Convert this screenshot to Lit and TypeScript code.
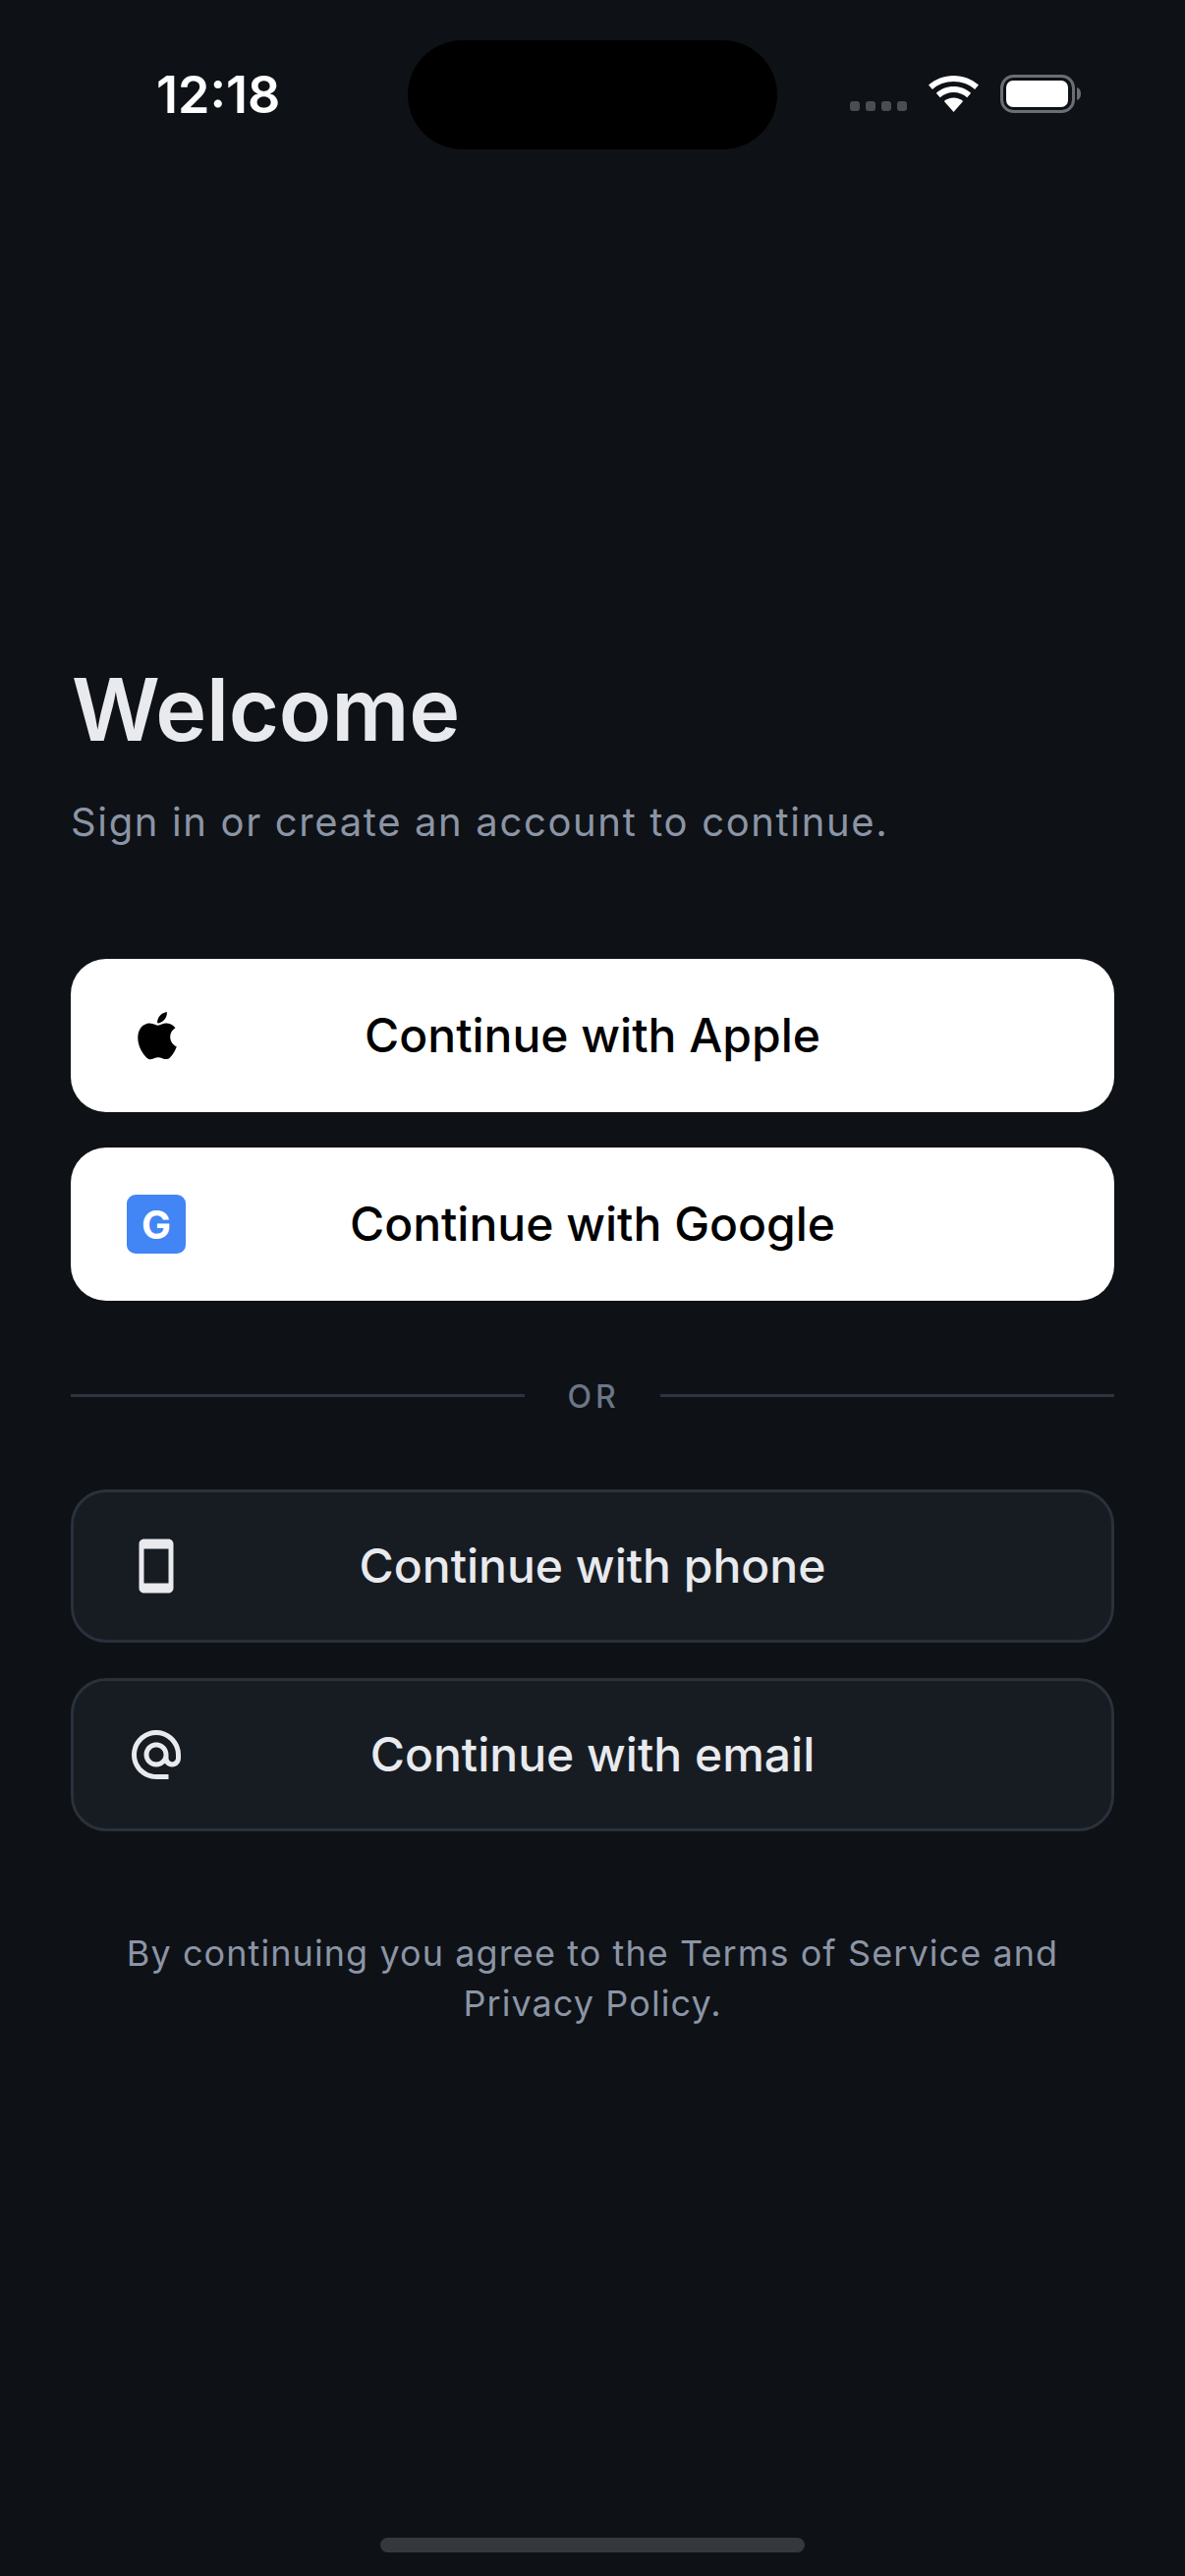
import { LitElement, html, css, svg } from "lit";
import { customElement } from "lit/decorators.js";

const apple = svg`<path transform="translate(-.05 -.81) scale(1.04 1.07)" d="M17.05 20.28c-.98.95-2.05.8-3.08.38-1.09-.43-2.09-.45-3.24 0-1.44.62-2.2.44-3.06-.38C2.79 15.25 3.51 7.59 9.05 7.31c1.35.07 2.29.74 3.08.8 1.18-.24 2.31-.93 3.57-.84 1.51.12 2.65.72 3.4 1.8-3.12 1.87-2.38 5.98.48 7.13-.57 1.5-1.31 2.99-2.54 4.09zM12.03 7.25c-.15-2.23 1.66-4.07 3.74-4.25.29 2.58-2.34 4.5-3.74 4.25z"/>`;
const phone = svg`<path d="M17 1.01L7 1c-1.1 0-2 .9-2 2v18c0 1.1.9 2 2 2h10c1.1 0 2-.9 2-2V3c0-1.1-.9-1.99-2-1.99zM17 19H7V5h10v14z"/>`;
const at = svg`<path d="M12 2C6.48 2 2 6.48 2 12s4.48 10 10 10h5v-2h-5c-4.34 0-8-3.66-8-8s3.66-8 8-8 8 3.66 8 8v1.43c0 .79-.71 1.57-1.5 1.57s-1.5-.78-1.5-1.57V12c0-2.76-2.24-5-5-5s-5 2.24-5 5 2.24 5 5 5c1.38 0 2.64-.56 3.54-1.47.65.89 1.77 1.47 2.96 1.47 1.97 0 3.5-1.6 3.5-3.57V12c0-5.52-4.48-10-10-10zm0 13c-1.66 0-3-1.34-3-3s1.34-3 3-3 3 1.34 3 3-1.34 3-3 3z"/>`;

@customElement("app-root")
export class AppRoot extends LitElement {
  static styles = css`
    :host {
      display: block;
      font-family: Inter, "Liberation Sans", sans-serif;
    }
    .screen {
      position: relative;
      width: 1206px;
      height: 2622px;
      background: #0e1116;
      overflow: hidden;
      display: flex;
      flex-direction: column;
    }
    .status {
      height: 111px;
      margin-top: 41px;
      display: grid;
      grid-template-columns: 415px 376px 1fr;
      align-items: start;
    }
    .time {
      color: #fff;
      font-size: 52px;
      font-weight: 600;
      line-height: 60px;
      padding: 26px 0 0 159px;
    }
    .island {
      height: 111px;
      background: #000;
      border-radius: 56px;
    }
    .sys {
      padding: 35px 0 0 74px;
    }
    .sys svg { display: block; }
    .main {
      padding: 520px 72px 0;
      display: flex;
      flex-direction: column;
    }
    h1 {
      margin: 0;
      padding-left: 1px;
      font-size: 88px;
      line-height: 100px;
      font-weight: 600;
      letter-spacing: -0.2px;
      color: #e8eaee;
    }
    .sub {
      margin: 37px 0 0;
      font-size: 40px;
      line-height: 56px;
      letter-spacing: 1.65px;
      color: #8b95a5;
    }
    .group {
      display: flex;
      flex-direction: column;
      gap: 36px;
    }
    .first { margin-top: 111px; }
    .btn {
      box-sizing: border-box;
      height: 156px;
      border-radius: 36px;
      padding: 0 57px;
      display: flex;
      align-items: center;
      font-size: 48px;
      font-weight: 500;
    }
    .light { background: #fff; color: #000; }
    .dark {
      background: #171c23;
      border: 3px solid #2a313b;
      padding: 0 54px;
      color: #e8eaee;
    }
    .ico {
      width: 60px;
      height: 60px;
      flex: none;
      fill: currentColor;
      display: block;
    }
    .label { flex: 1; text-align: center; padding: 0 60px 2px 0; }
    .g {
      width: 60px;
      height: 60px;
      flex: none;
      border-radius: 9px;
      background: #4285f4;
      color: #fff;
      font-size: 40px;
      font-weight: 700;
      display: flex;
      align-items: center;
      justify-content: center;
    }
    .or {
      display: flex;
      align-items: center;
      gap: 41px;
      height: 192px;
      color: #6b7686;
      font-size: 32px;
      font-weight: 500;
      letter-spacing: 4px;
    }
    .or span { padding: 2px 0 0 2px; }
    .or i { flex: 1; height: 3px; background: #2d3440; }
    .legal {
      margin: 99px 0 0;
      padding: 0 24px;
      text-align: center;
      font-size: 36px;
      line-height: 51px;
      letter-spacing: 1.08px;
      color: #8b95a5;
    }
    .home {
      position: absolute;
      left: 387px;
      top: 2583px;
      width: 432px;
      height: 15px;
      border-radius: 8px;
      background: #36383b;
    }
  `;

  private btn(kind: string, icon: unknown, label: string) {
    return html`<div class="btn ${kind}">${icon}<span class="label">${label}</span></div>`;
  }

  private icon(p: unknown) {
    return html`<svg class="ico" viewBox="0 0 24 24">${p}</svg>`;
  }

  render() {
    return html`
      <div class="screen">
        <div class="status">
          <div class="time">12:18</div>
          <div class="island"></div>
          <div class="sys">
            <svg width="260" height="40" viewBox="0 0 260 40">
              <g fill="#4a4e54">
                <rect x="0" y="27" width="10" height="10" rx="3"/>
                <rect x="16" y="27" width="10" height="10" rx="3"/>
                <rect x="32" y="27" width="10" height="10" rx="3"/>
                <rect x="48" y="27" width="10" height="10" rx="3"/>
              </g>
              <g fill="#fff" transform="translate(105.500 1) scale(1.040 1) translate(-105 0)">
                <path d="M105 0c-9.500 0-18 3.600-24.500 9.500l3.700 4.500C89.700 8.900 97 6 105 6s15.300 2.900 20.800 8l3.700-4.500C123 3.600 114.500 0 105 0z"/>
                <path d="M105 11c-6.600 0-12.600 2.500-17 6.700l3.800 4.500C95.200 19 99.900 17 105 17s9.800 2 13.200 5.200l3.800-4.500C117.600 13.500 111.600 11 105 11z"/>
                <path d="M105 22.500c-3.600 0-6.900 1.400-9.300 3.600L105 37l9.300-10.900c-2.400-2.200-5.700-3.600-9.300-3.600z"/>
              </g>
              <rect x="154.500" y="1.500" width="73" height="36" rx="12" fill="none" stroke="#6b6e73" stroke-width="3"/>
              <rect x="159" y="6" width="63" height="27" rx="7" fill="#fff"/>
              <path d="M231 13c2.500.8 4 3 4 6.500s-1.500 5.700-4 6.500z" fill="#6b6e73"/>
            </svg>
          </div>
        </div>
        <div class="main">
          <h1>Welcome</h1>
          <p class="sub">Sign in or create an account to continue.</p>
          <div class="group first">
            ${this.btn("light", this.icon(apple), "Continue with Apple")}
            ${this.btn("light", html`<span class="g">G</span>`, "Continue with Google")}
          </div>
          <div class="or"><i></i><span>OR</span><i></i></div>
          <div class="group">
            ${this.btn("dark", this.icon(phone), "Continue with phone")}
            ${this.btn("dark", this.icon(at), "Continue with email")}
          </div>
          <p class="legal">By continuing you agree to the Terms of Service and Privacy Policy.</p>
        </div>
        <div class="home"></div>
      </div>
    `;
  }
}
